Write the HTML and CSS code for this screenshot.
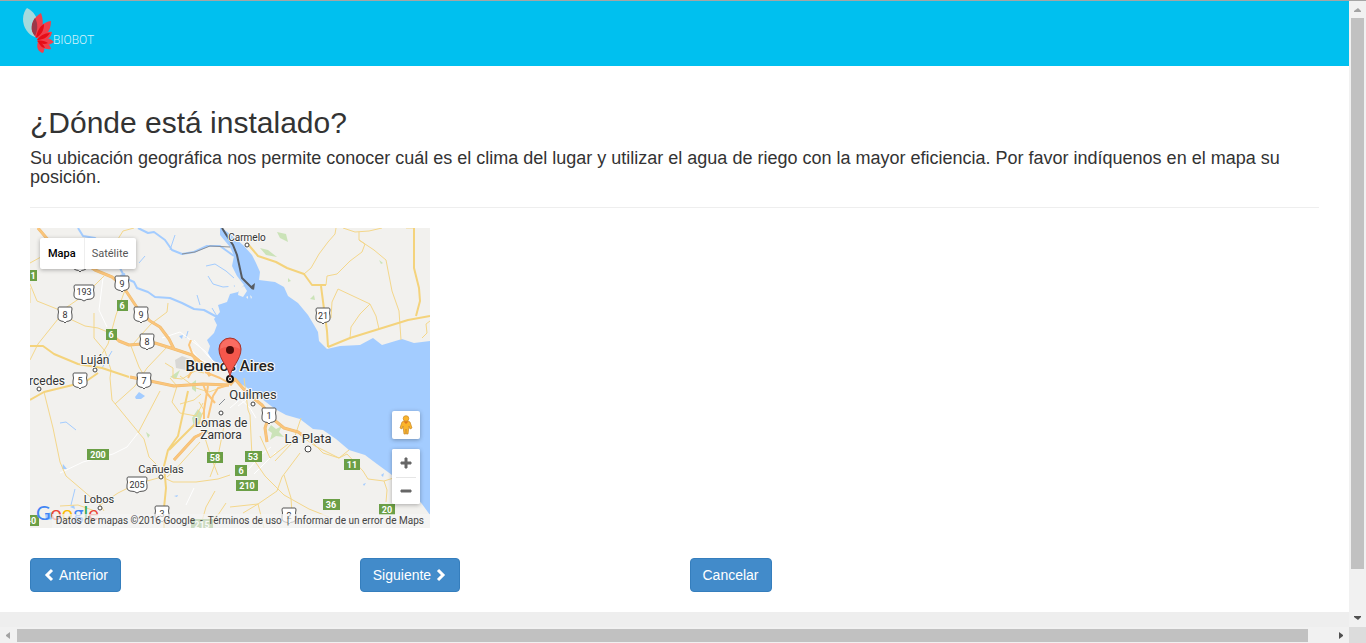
FILE: index.html
```html
<!DOCTYPE html>
<html lang="es">
<head>
<meta charset="utf-8">
<title>Biobot</title>
<link rel="stylesheet" href="styles.css">
</head>
<body>
<div class="frame">
  <div class="page">
    <header class="navbar">
      <a class="brand" href="#" aria-label="Biobot">
        <svg class="brand-logo" width="80" height="50" viewBox="0 0 80 50">
          <path fill="#a5dadd" d="M7 3C13 6 18 12 18 20L15 32C8 30 3 22 3 14C3 9 5 5 7 3Z"/>
          <g fill="#f0404c">
            <path d="M21 8C14 12 11 19 12 26L16 33C22 29 25 19 21 8Z"/>
            <path d="M31 16C23 17 17 23 16 33C25 32 31 27 31 16Z"/>
            <path d="M32 27C26 26 19 29 17 35C24 37 31 34 32 27Z"/>
            <path d="M34 37C29 32 23 32 17 36C22 41 29 41 34 37Z"/>
            <path d="M31 44C30 38 24 36 18 37C20 42 25 45 31 44Z"/>
            <path d="M23 48C26 43 24 39 18 37C16 42 18 47 23 48Z"/>
          </g>
          <path fill="#9b3948" d="M15 13C18 18 18 25 15 31C10 26 11 18 15 13Z"/>
          <path fill="#e60d17" d="M24 19C24 26 21 30 16 33C17 27 19 22 24 19ZM30 28C27 33 22 35 17 35C20 31 24 28 30 28ZM28 38C24 40 21 39 17 36C21 35 25 36 28 38ZM25 43C22 43 20 40 18 37C22 38 24 40 25 43Z"/>
          <text class="brand-name" x="33" y="39">BIOBOT</text>
        </svg>
      </a>
    </header>

    <main class="content">
      <h2 class="title">¿Dónde está instalado?</h2>
      <h4 class="lead">Su ubicación geográfica nos permite conocer cuál es el clima del lugar y utilizar el agua de riego con la mayor eficiencia. Por favor indíquenos en el mapa su posición.</h4>
      <hr class="rule">

      <section class="map" aria-label="Mapa">
        <svg class="map-canvas" width="400" height="300" viewBox="0 0 400 300">
          <defs>
            <path id="shield" d="M-6 -7H6Q7 -7 7 -5Q6 -2 7 1V4Q7 6 4 7Q1 7 0 9Q-1 7 -4 7Q-7 6 -7 4V1Q-6 -2 -7 -5Q-7 -7 -6 -7Z"/>
            <path id="shield-wide" d="M-9 -7H9Q10 -7 10 -5Q9 -2 10 1V4Q10 6 7 7Q2 7 0 9Q-2 7 -7 7Q-10 6 -10 4V1Q-9 -2 -10 -5Q-10 -7 -9 -7Z"/>
          </defs>
          <rect width="400" height="300" fill="#f2f1ee"/>
          <path fill="#d9d8d5" d="M145 132L152 128L160 131L164 138L156 142L146 140Z"/>
          <g fill="#cbe3b8">
            <path d="M247 4L256 6L258 14L250 10ZM230 20L238 22L247 29L236 27ZM280 71L284 67L285 72ZM241 197L246 201L252 198L249 204L254 209L246 208L240 212L242 205L238 202ZM162 190L168 181L172 186L170 196L164 199ZM116 204L120 207L118 210ZM349 32L353 35L351 36ZM162 155L166 152L166 164L162 161ZM140 149L150 142L146 151ZM258 50L261 53L258 54Z"/>
          </g>

          <path fill="#a3ccff" d="M192 0L205 10L214 18L222 27L226 35L230 44L229 52L245 54L254 59L258 68L268 75L278 87L284 97L288 104L289 113L297 121L310 118L330 117L343 110L352 117L372 111L384 115L400 113V287L392 276L380 262L362 247L347 236L335 227L319 222L306 211L293 202L283 201L270 191L256 187L245 181L232 171L222 163L211 156L202 149L198 140L190 136L182 132L178 125L180 118L177 112L184 105L187 97L184 91L190 84L188 77L197 74L200 66L208 64L214 57L207 48L202 38L204 28L200 19L190 7L190 0Z"/>
          <g fill="none" stroke="#a3ccff" stroke-linejoin="round">
            <path stroke-width="2" d="M48 0L53 8L65 10L72 17M108 0L118 5L124 4L135 12L142 22L152 26L164 24L177 18L190 18L204 28M90 40L95 50L104 54L107 60L118 64L125 69L140 70L152 75L164 81L174 82L187 89"/>
            <path stroke-width="1" d="M140 22L145 7M176 38L185 36L196 43L204 50M178 48L183 56L193 59L205 58M167 67L170 77M182 80L188 90M109 35L115 28M156 110L158 103M30 195L36 194L46 202M82 123L72 140M45 261L41 277"/>
          </g>
          <g fill="#a3ccff">
            <path d="M105 169L109 164L115 168L111 171L106 171ZM33 236L37 241L32 241ZM15 286L22 284L24 291L16 292ZM40 279L44 277L45 281ZM144 268L148 267L147 269ZM149 108L153 107L152 111ZM90 47L95 45L96 51L92 52ZM351 247L354 245L353 249ZM333 256L336 255L334 258Z"/>
          </g>
          <path fill="#f2f1ee" d="M200 50L204 58L203 65L198 61ZM209 61L214 58L217 63L213 69L208 67ZM216 69L218 68L218 71ZM220 67L222 69L221 71Z"/>

          <g fill="none" stroke="#fff" stroke-width="1">
            <path d="M73 50L69 82L77 99M30 245L53 234L83 226L97 219L108 205M132 110L150 104L166 116L175 123L183 133M218 242L232 226L241 219M224 246L237 233L246 224M161 121L169 131L183 137M200 180L214 168M156 277L164 260"/>
            <path d="M164 112L178 128L190 140M205 166L220 180L226 190M210 162L216 172L208 178"/>
          </g>
          <g fill="none" stroke="#f4d78b" stroke-width="1">
            <path d="M0 56L7 73L27 81L40 91L55 98L68 100L80 105M0 132L8 116L28 91L34 81L53 68L66 56L74 48M64 85L64 110L75 123L81 142L80 150M95 62L86 87L78 116L67 134M101 118L109 139L116 151M138 75L137 84L121 96L103 116M138 118L117 140L105 158L85 176M80 150L82 172L100 194L114 211L119 229L130 240M108 205L130 163M14 164L23 200L30 234L36 248L70 277L74 283M70 277L88 265L98 260L117 253L132 249L143 254L166 254L188 251L200 247M137 249L143 244L170 214M0 60L0 75M140 150L147 158L142 174L150 185L166 188L173 175M169 174L174 182L168 196M30 278L48 277L65 283M150 176L164 172L171 166M175 210L181 229L188 247M194 198L188 228L180 249M214 150L218 182L220 187L222 229L235 248L254 267L279 281L299 289M230 208L240 230L262 213M270 225L252 249L247 263L228 276L213 285M254 247L261 270L262 286M200 279L228 276M228 276L234 300M245 233L263 214L271 190M266 202L278 210L293 225L309 230L319 222M270 207L285 218L309 230L317 226L333 243L338 251L354 253L370 248M354 253L357 262L356 274M88 11L93 3L104 0M306 0L305 6L298 14L289 26L281 40L274 46M313 0L325 4L339 3L352 0M329 4L329 12L335 16L332 24L320 33L307 46L297 48L296 57M329 12L344 22L356 32L362 63L369 83L371 112M308 61L302 74L301 90M308 61L340 76L346 88L349 101M340 76L330 86L321 99L320 110M400 93L396 96L397 105L392 110M376 0L384 0M185 263L176 279L170 300M196 275L188 287L180 291M20 24L0 35M150 148L166 160L179 164L198 157M135 135L143 140L143 150L152 151L165 143L174 145"/>
          </g>
          <g fill="none" stroke="#f4d37c" stroke-width="2" stroke-linejoin="round">
            <path d="M0 172L14 164L55 154L68 145M0 118L13 118L24 126L48 136L72 140L99 149M217 15L228 28L246 34L257 40L274 46L282 57L296 57M291 58L294 81L297 103L298 119M298 119L320 110L349 101L378 92L400 88M384 0L384 40L389 60L390 73L386 88M158 163L152 190L148 208L138 222L134 238L136 260L134 280L134 300M139 222L153 208L164 197L175 192"/>
          </g>
          <g fill="none" stroke="#edbb72" stroke-width="3" stroke-linejoin="round">
            <path d="M8 0L19 13L27 20L42 27L65 42L82 49L92 57L100 69L108 81L120 93L130 99L139 111L144 121L162 127L173 136L180 148M80 105L89 113L99 117L125 115L144 121M100 149L120 153L144 158L173 156L199 157M200 157L205 151L217 165L232 177L243 191L254 200L268 204L274 208M239 188L235 200L237 214M144 232L154 221L165 209L178 203"/>
          </g>
          <g fill="none" stroke="#fbc57b" stroke-width="2" stroke-linejoin="round">
            <path d="M8 0L19 13L27 20L42 27L65 42L82 49L92 57L100 69L108 81L120 93L130 99L139 111L144 121L162 127L173 136L180 148M80 105L89 113L99 117L125 115L144 121M100 149L120 153L144 158L173 156L199 157M162 125L166 135L158 150M162 125L159 117L161 112M200 157L205 151L217 165L232 177L243 191L254 200L268 204L274 208M239 188L235 200L237 214M144 232L154 221L165 209L178 203M175 144L190 150L199 155M173 156L176 164L185 175M178 158L174 182L174 196M199 157L188 160L183 168L178 190"/>
          </g>
          <path fill="none" stroke="#565b62" stroke-width="2" d="M192 0L197 8L203 17L207 27L212 50L223 61"/>
          <path fill="#565b62" d="M220 59L225 55L224 62Z"/>
          <path fill="none" stroke="#8a8f96" d="M152 26L165 24L180 18L200 19M189 177L195 171"/>

          <g class="route-shields">
            <use href="#shield" x="50" y="35"/>
            <use href="#shield-wide" x="54" y="64"/><use href="#shield" x="92" y="55"/>
            <use href="#shield" x="35" y="86"/><use href="#shield" x="111" y="86"/>
            <use href="#shield" x="117" y="113"/><use href="#shield" x="50" y="152"/>
            <use href="#shield" x="114" y="152"/><use href="#shield" x="293" y="87"/>
            <use href="#shield" x="239" y="187"/><use href="#shield-wide" x="107" y="256"/>
            <use href="#shield" x="132" y="285"/><use href="#shield" x="259" y="287"/>
          </g>
          <g class="route-numbers">
            <text x="54" y="67">193</text><text x="92" y="59">9</text>
            <text x="35" y="90">8</text><text x="111" y="90">9</text>
            <text x="117" y="117">8</text><text x="50" y="156">5</text>
            <text x="114" y="156">7</text><text x="293" y="91">21</text>
            <text x="239" y="191">1</text><text x="107" y="260">205</text>
            <text x="132" y="289">3</text><text x="259" y="291">2</text>
          </g>
          <g fill="#6b9f46">
            <path d="M0 42H7V53H0ZM87 72H98V83H87ZM76 101H87V112H76ZM57 221H79V232H57ZM177 224H193V235H177ZM215 223H232V234H215ZM205 237H217V248H205ZM206 252H228V263H206ZM314 231H330V242H314ZM293 271H310V282H293ZM349 276H365V287H349ZM0 287H9V298H0ZM161 291H183V302H161Z"/>
          </g>
          <g class="green-numbers">
            <text x="3" y="51">1</text><text x="92" y="81">6</text><text x="81" y="110">6</text>
            <text x="68" y="230">200</text><text x="185" y="233">58</text><text x="223" y="232">53</text>
            <text x="211" y="246">6</text><text x="217" y="261">210</text><text x="322" y="240">11</text>
            <text x="301" y="280">36</text><text x="357" y="285">20</text><text x="1" y="296">40</text>
            <text x="172" y="300">215</text>
          </g>

          <g fill="#fff" stroke="#444" stroke-width="1">
            <circle cx="217" cy="17" r="2"/><circle cx="65" cy="142" r="2"/><circle cx="9" cy="161" r="2"/>
            <circle cx="223" cy="176" r="2"/><circle cx="191" cy="185" r="2"/><circle cx="278" cy="221" r="3"/>
            <circle cx="131" cy="249" r="2"/><circle cx="70" cy="280" r="2"/>
          </g>
          <g class="places">
            <text class="place-small" x="217" y="13">Carmelo</text>
            <text class="place-city" x="200" y="143">Buenos Aires</text>
            <text class="place" x="65" y="136">Luján</text>
            <text class="place place-end" x="35" y="157">Mercedes</text>
            <text class="place-large" x="223" y="171">Quilmes</text>
            <text class="place" x="191" y="199">Lomas de</text>
            <text class="place" x="191" y="211">Zamora</text>
            <text class="place-large" x="278" y="215">La Plata</text>
            <text class="place-mid" x="131" y="245">Cañuelas</text>
            <text class="place-mid" x="69" y="275">Lobos</text>
          </g>
          <circle cx="200" cy="151" r="3" fill="#fff" stroke="#111" stroke-width="2"/>
          <circle cx="200" cy="151" r="1" fill="#111"/>
          <path fill="#f4574c" stroke="#a8342b" d="M200 149C199 139 189 132 189 121A11 11 0 0 1 211 121C211 132 201 139 200 149Z"/>
          <path fill="#ff8177" opacity=".5" d="M190 121A10 10 0 0 1 210 121C205 118 195 118 190 121Z"/>
          <circle cx="200" cy="122" r="4" fill="#4f0d0b"/>

          <text class="map-logo" x="6" y="292"><tspan fill="#4285f4">G</tspan><tspan fill="#ea4335">o</tspan><tspan fill="#fbbc05">o</tspan><tspan fill="#4285f4">g</tspan><tspan fill="#34a853">l</tspan><tspan fill="#ea4335">e</tspan></text>
        </svg>

        <div class="map-types">
          <button class="map-type map-type-active" type="button">Mapa</button>
          <button class="map-type" type="button">Satélite</button>
        </div>

        <div class="map-tools">
          <button class="map-tool" type="button" aria-label="Pegman">
            <svg width="14" height="20" viewBox="0 0 14 20">
              <path fill="#fbb42a" stroke="#c98a2a" stroke-width=".7" d="M3 7L5 6H9L11 7L13 13L11 14L10 11L9 19H7.300L7 14L6.700 19H5L4 11L3 14L1 13Z"/>
              <circle cx="7" cy="3.500" r="2.800" fill="#fbb42a" stroke="#c98a2a" stroke-width=".7"/>
              <path fill="#e0771e" d="M4.500 6.500H9.500L7 9Z"/>
            </svg>
          </button>
          <div class="zoom">
            <button class="map-tool" type="button" aria-label="Acercar">
              <svg width="12" height="12" viewBox="0 0 12 12"><path fill="#666" d="M5 1H7V5H11V7H7V11H5V7H1V5H5Z" stroke="#666"/></svg>
            </button>
            <button class="map-tool zoom-out" type="button" aria-label="Alejar">
              <svg width="12" height="12" viewBox="0 0 12 12"><path fill="#666" d="M1 5H11V7H1Z" stroke="#666"/></svg>
            </button>
          </div>
        </div>

        <div class="map-credits">
          <span>Datos de mapas ©2016 Google</span><span>-</span><a href="#">Términos de uso</a><span>|</span><a href="#">Informar de un error de Maps</a>
        </div>
      </section>

      <div class="actions">
        <div><button class="btn" type="button"><svg width="12" height="14" viewBox="0 0 12 14"><path d="M9 2L4 7L9 12" fill="none" stroke="#fff" stroke-width="3"/></svg><span>Anterior</span></button></div>
        <div><button class="btn" type="button"><span>Siguiente</span><svg width="12" height="14" viewBox="0 0 12 14"><path d="M3 2L8 7L3 12" fill="none" stroke="#fff" stroke-width="3"/></svg></button></div>
        <div><button class="btn" type="button">Cancelar</button></div>
      </div>
    </main>
  </div>

  <div class="scroll scroll-v">
    <svg width="17" height="17" viewBox="0 0 17 17"><path fill="#a3a3a3" d="M5 11V10L9 7L12 10V11Z"/></svg>
    <div class="thumb"></div>
    <svg class="arrow-last" width="17" height="17" viewBox="0 0 17 17"><path fill="#505050" d="M5 6H12V7L9 10L5 7Z"/></svg>
  </div>
  <div class="scroll scroll-h">
    <svg width="17" height="16" viewBox="0 0 17 16"><path fill="#a3a3a3" d="M10 5V12L6 9V8Z"/></svg>
    <div class="thumb"></div>
    <svg class="arrow-last" width="17" height="16" viewBox="0 0 17 16"><path fill="#505050" d="M7 5V12L11 9V8Z"/></svg>
  </div>
  <div class="corner"></div>
</div>
</body>
</html>
```
FILE: styles.css
```css
* { box-sizing: border-box; }

body {
  margin: 0;
  background: #eee;
  color: #333;
  font: 14px/20px "Liberation Sans", Arial, sans-serif;
}

button { font: inherit; cursor: pointer; }
svg { display: block; }

.frame {
  display: grid;
  grid-template: 1fr 16px / minmax(0, 1fr) 17px;
  min-height: 100vh;
  border-top: 1px solid #a5a5a5;
}

.page { padding-bottom: 15px; }

.navbar {
  height: 65px;
  padding: 4px 20px;
  background: #00c0ef;
}
.brand { display: inline-block; }
.brand-name {
  font: 300 12px Roboto, sans-serif;
  fill: #d5f3fc;
}

.content {
  padding: 40px 30px 20px;
  background: #fff;
}
.title {
  margin: 0 0 10px;
  font-size: 30px;
  font-weight: 400;
  line-height: 33px;
}
.lead {
  margin: 0 0 20px;
  font-size: 18px;
  font-weight: 400;
  line-height: 19px;
}
.rule {
  margin: 0 0 20px;
  border: 0;
  border-top: 1px solid #eee;
}

.map {
  position: relative;
  width: 400px;
  max-width: 100%;
  margin-bottom: 30px;
  overflow: hidden;
  font-family: Roboto, sans-serif;
}

.route-shields { fill: #fff; stroke: #555; stroke-width: 1; }
.route-numbers, .green-numbers, .places { text-anchor: middle; }
.route-numbers { font-size: 9px; fill: #333; }
.green-numbers { font-size: 9px; font-weight: 700; fill: #fff; }
.places {
  fill: #333;
  stroke: #f8f8f6;
  stroke-width: 2px;
  stroke-linejoin: round;
  paint-order: stroke;
}
.place-small { font-size: 10px; }
.place-mid { font-size: 11px; }
.place { font-size: 12px; }
.place-large { font-size: 13px; }
.place-city { font-size: 15px; font-weight: 500; fill: #222; }
.place-end { text-anchor: end; }
.map-logo { font: 400 20px Lato, sans-serif; }

.map-types {
  position: absolute;
  top: 10px;
  left: 10px;
  display: flex;
  border-radius: 2px;
  background: #fff;
  box-shadow: 0 1px 4px rgba(0, 0, 0, .3);
}
.map-type {
  padding: 8px;
  border: 0;
  background: none;
  color: #565656;
  font-size: 11px;
  line-height: 15px;
}
.map-type + .map-type { box-shadow: inset 1px 0 #eee; }
.map-type-active { color: #000; font-weight: 500; }

.map-tools {
  position: absolute;
  right: 10px;
  bottom: 24px;
  display: grid;
  gap: 10px;
}
.map-tool {
  display: grid;
  place-items: center;
  width: 28px;
  height: 28px;
  padding: 0;
  border: 0;
  border-radius: 2px;
  background: #fff;
}
.map-tools > .map-tool, .zoom { box-shadow: 0 1px 4px rgba(0, 0, 0, .3); }
.zoom { border-radius: 2px; background: #fff; }
.zoom-out {
  height: 27px;
  background: linear-gradient(#e6e6e6, #e6e6e6) center top / 20px 1px no-repeat #fff;
}

.map-credits {
  position: absolute;
  right: 0;
  bottom: 0;
  display: flex;
  gap: 5px;
  padding: 0 6px 0 4px;
  background: rgba(245, 245, 245, .7);
  color: #444;
  font-size: 10px;
  line-height: 14px;
  white-space: nowrap;
}
.map-credits a { color: inherit; text-decoration: none; }

.actions {
  display: grid;
  grid-template-columns: repeat(4, minmax(0, 1fr));
  gap: 30px;
}
.btn {
  display: inline-flex;
  align-items: center;
  gap: 4px;
  padding: 6px 12px;
  border: 1px solid #357ebd;
  border-radius: 4px;
  background: #428bca;
  color: #fff;
}

.scroll { display: flex; background: #f1f1f1; }
.scroll-v { flex-direction: column; }
.thumb { background: #c1c1c1; }
.scroll-v .thumb { flex: 0 1 88%; margin: 0 2px; }
.scroll-h { grid-row: 2; }
.scroll-h .thumb { flex: 0 1 1291px; margin: 2px 0 1px; }
.scroll svg { flex: none; }
.scroll-v .arrow-last { margin-top: auto; }
.scroll-h .arrow-last { margin-left: auto; }
.corner { background: #dcdcdc; }
```
